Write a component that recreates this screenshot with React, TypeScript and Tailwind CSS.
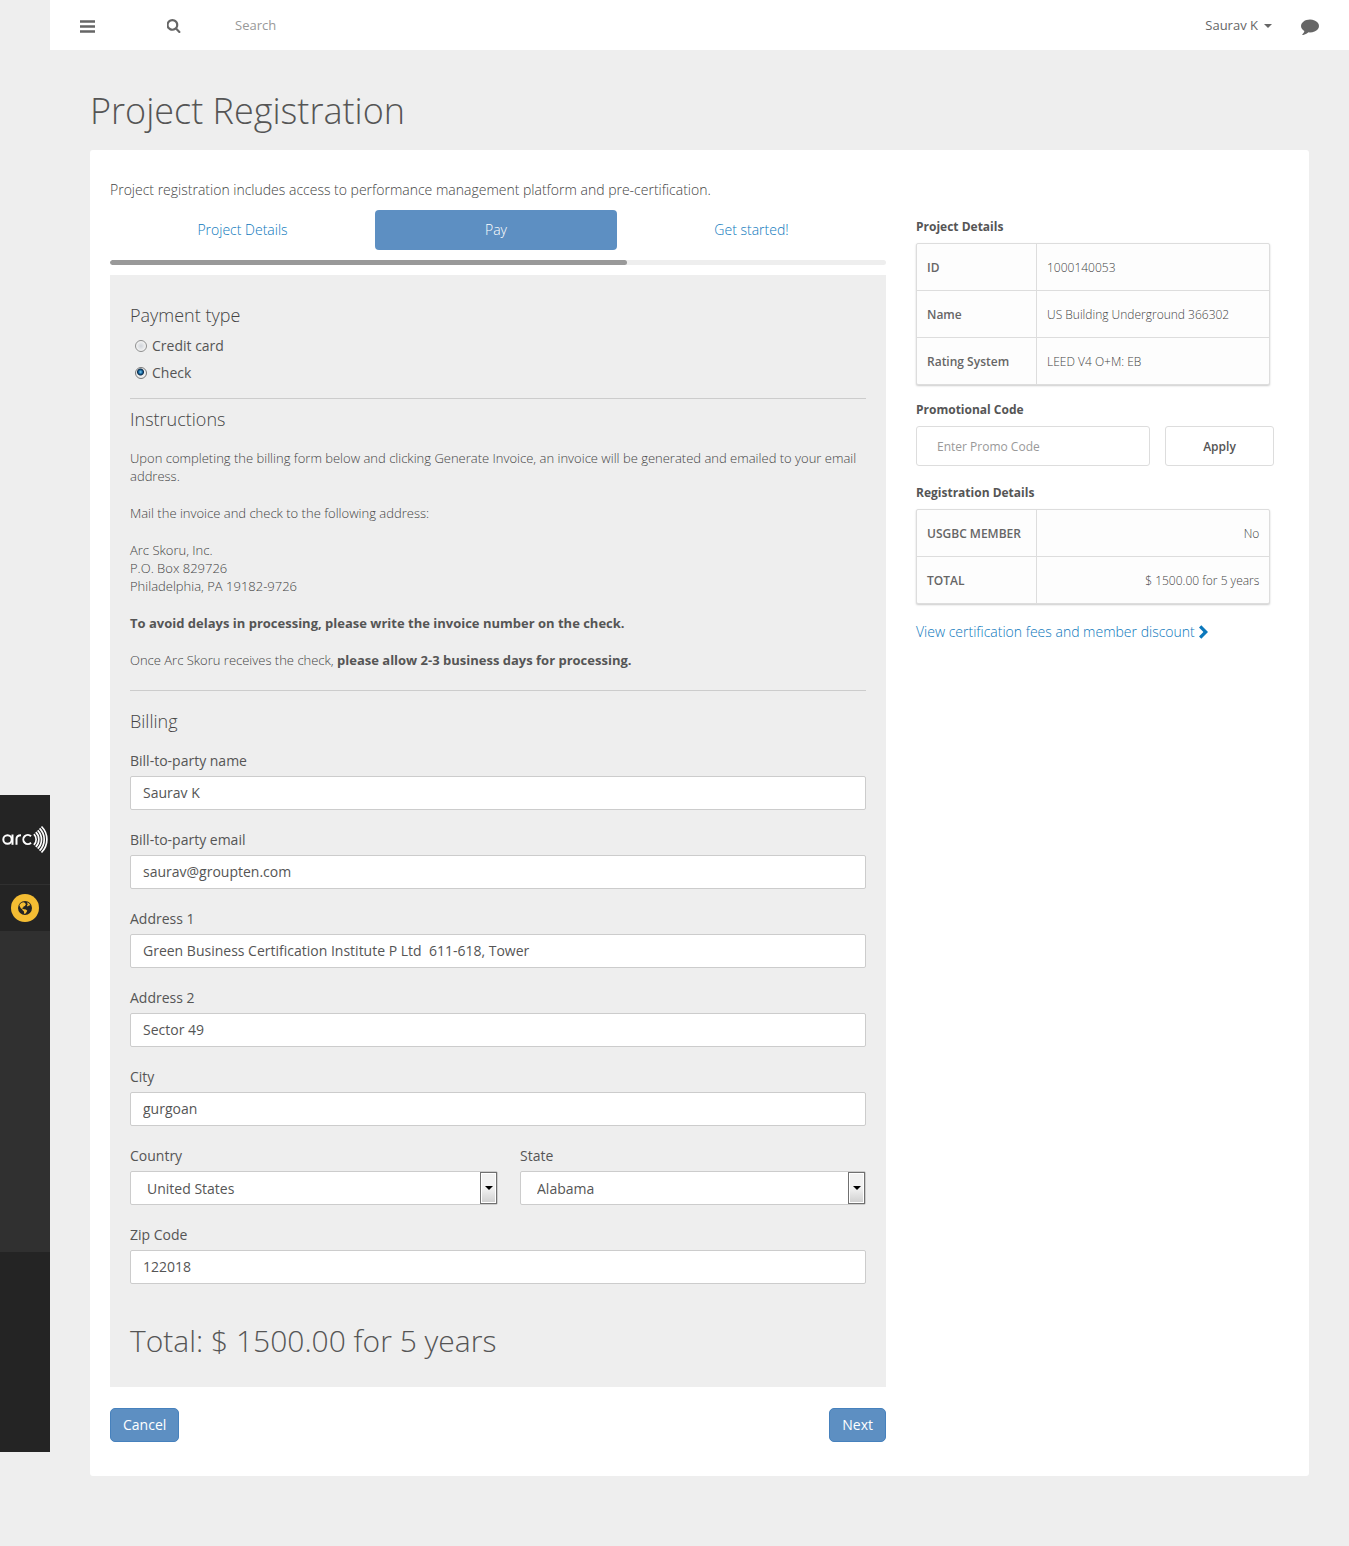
import type { ReactNode } from "react";

function MenuIcon() {
  return (
    <svg viewBox="0 0 15 13" className="h-[13px] w-[15px] fill-current" aria-hidden="true">
      <path d="M0 .3h15v2.400H0zM0 5.300h15v2.400H0zM0 10.300h15v2.400H0z" />
    </svg>
  );
}

function SearchIcon() {
  return (
    <svg viewBox="128 128 1536 1664" className="size-[14px] fill-current" aria-hidden="true">
      <path d="M1152 832q0-185-131.5-316.5t-316.5-131.5-316.5 131.5-131.5 316.5 131.5 316.5 316.5 131.5 316.5-131.5 131.5-316.5zm512 832q0 52-38 90t-90 38q-54 0-90-38l-343-342q-179 124-399 124-143 0-273.5-55.5t-225-150-150-225-55.5-273.5 55.5-273.5 150-225 225-150 273.5-55.5 273.5 55.5 225 150 150 225 55.5 273.5q0 220-124 399l343 343q37 37 37 90z" />
    </svg>
  );
}

function CommentIcon() {
  return (
    <svg viewBox="0 0 1792 1792" className="size-[18px] fill-current" aria-hidden="true">
      <path d="M1792 896q0 174-120 321.5t-326 233-450 85.5q-70 0-145-8-198 175-460 242-49 14-114 22-17 2-30.5-9t-17.5-29v-1q-3-4-.5-12t2-10 4.5-9.5l6-9 7-8.5 8-9q7-8 31-34.5t34.5-38 31-39.5 32.5-51 27-59 26-76q-157-89-247.5-220t-90.5-281q0-130 71-248.5t191-204.5 286-136.5 348-50.5q244 0 450 85.5t326 233 120 321.5z" />
    </svg>
  );
}

function ChevronIcon() {
  return (
    <svg viewBox="0 0 9 14" className="h-[14px] w-[9px] fill-current" aria-hidden="true">
      <path d="M0 2.500 2.300 .2 9 7 2.300 13.800 0 11.500 4.400 7z" />
    </svg>
  );
}

function GlobeIcon() {
  return (
    <svg viewBox="0 0 14 14" className="size-[14px]" aria-hidden="true">
      <circle cx="7" cy="7" r="7" fill="#242424" />
      <path
        fill="#f4bd33"
        d="M1.300 4 3.200 1.900 5.200 1.200 6.800 1.800 7.900 3.200 6.900 4.900 5.600 5.600 5 6.900 4 6.600 4.500 7.700 6 8.200 7.900 8.600 9.300 9.700 8.300 11.500 7 12.900 6.100 12.500 6 10.600 4.600 9.200 4.200 8.300 2.800 7.200 2 5.700ZM9 1.300 11.200 2.500 12.400 4.200 10.900 4.600 9.800 5.600 8.900 4.700 9.700 3.500Z"
      />
    </svg>
  );
}

/* Word mark followed by five concentric quarter arcs. */
function Logo() {
  return (
    <svg viewBox="0 0 50 29" className="h-[29px] w-full" fill="none" stroke="#fff" role="img" aria-label="arc">
      <g strokeWidth="2">
        <circle cx="7.500" cy="14.500" r="4.200" />
        <path d="M12.500 9.500V19.800" />
        <path d="M16.500 19.800V14Q16.500 10.300 21 10.300" />
        <path d="M31 11.300A4.500 4.500 0 1 0 31 17.700" />
      </g>
      <g strokeWidth="1.700">
        <path d="M33.900 9.100A7.600 7.600 0 0 1 33.900 19.900" />
        <path d="M35.800 7.200A10.300 10.300 0 0 1 35.800 21.800" />
        <path d="M37.700 5.300A13 13 0 0 1 37.700 23.700" />
        <path d="M39.600 3.400A15.700 15.700 0 0 1 39.600 25.600" />
        <path d="M41.500 1.500A18.400 18.400 0 0 1 41.500 27.500" />
      </g>
    </svg>
  );
}

function Sidebar() {
  return (
    <aside className="mt-[795px] w-[50px] shrink-0 self-start bg-[#242424]">
      <a href="#home" className="flex h-[90px] items-center border-b border-[#303030]">
        <Logo />
      </a>
      <a href="#world" aria-label="Projects" className="flex h-[46px] items-center justify-center">
        <span className="flex size-7 items-center justify-center rounded-full bg-[#f4bd33]">
          <GlobeIcon />
        </span>
      </a>
      <div className="h-[321px] bg-[#303030]" />
      <div className="h-[200px]" />
    </aside>
  );
}

function TopBar() {
  return (
    <header className="flex h-[50px] items-center bg-white px-[30px] pt-[2px] text-[13px] text-[#666]">
      <button type="button" aria-label="Menu" className="mr-[72px]">
        <MenuIcon />
      </button>
      <label htmlFor="search" aria-label="Search">
        <SearchIcon />
      </label>
      <input
        id="search"
        type="text"
        placeholder="Search"
        className="ml-[54px] min-w-0 flex-1 outline-none placeholder:text-[#999]"
      />
      <button type="button" className="mr-[29px] flex items-center gap-[6px]">
        Saurav K
        <span className="border-x-4 border-t-4 border-x-transparent border-t-[#666]" />
      </button>
      <button type="button" aria-label="Messages">
        <CommentIcon />
      </button>
    </header>
  );
}

function Steps() {
  return (
    <nav>
      <div className="grid grid-cols-[265fr_242fr_269fr] text-center text-sm leading-5 font-light text-[#0c78bc]">
        <a href="#details" className="py-[10px]">Project Details</a>
        <a href="#pay" aria-current="step" className="rounded bg-[#5d8fc2] py-[10px] text-white">Pay</a>
        <a href="#start" className="py-[10px]">Get started!</a>
      </div>
      <div className="my-[10px] h-[5px] overflow-hidden rounded-full bg-[#eee]">
        <div className="h-full w-2/3 rounded-full bg-[#999]" />
      </div>
    </nav>
  );
}

function PaymentOption({ id, label, checked }: { id: string; label: string; checked?: boolean }) {
  return (
    <div className="flex h-[27px] items-center gap-[5px] pl-[5px]">
      <input
        type="radio"
        id={id}
        name="payment"
        defaultChecked={checked}
        className="size-3 appearance-none rounded-full border border-[#8e8f8f] bg-[radial-gradient(circle,#d0d4da_0,#f4f4f4_5px)] checked:border-[#777] checked:bg-[radial-gradient(circle_at_45%_40%,#7fd3f5_0,#14609a_2px,#0b2b47_3px,#eee_4px)]"
      />
      <label htmlFor={id}>{label}</label>
    </div>
  );
}

function Field({ id, label, value }: { id: string; label: string; value: string }) {
  return (
    <div>
      <label htmlFor={id} className="mb-[5px] block">{label}</label>
      <input
        id={id}
        type="text"
        defaultValue={value}
        className="h-[34px] w-full rounded-xs border border-[#ccc] bg-white px-3 pb-[2px] outline-none"
      />
    </div>
  );
}

function SelectField({ id, label, value }: { id: string; label: string; value: string }) {
  return (
    <div>
      <label htmlFor={id} className="mb-[5px] block">{label}</label>
      <div className="relative">
        <select
          id={id}
          defaultValue={value}
          className="h-[34px] w-full appearance-none rounded-xs border border-[#ccc] bg-white px-4 pt-[2px] outline-none"
        >
          <option>{value}</option>
        </select>
        <span className="pointer-events-none absolute inset-y-px right-px flex w-[17px] items-center justify-center border border-[#707070] bg-linear-to-b from-[#f2f2f2] from-50% to-[#cfcfcf] inset-ring inset-ring-white">
          <span className="border-x-4 border-t-4 border-x-transparent border-t-black" />
        </span>
      </div>
    </div>
  );
}

function Heading({ children }: { children: ReactNode }) {
  return <h2 className="text-lg leading-5 font-light text-[#444]">{children}</h2>;
}

function SideTitle({ children }: { children: ReactNode }) {
  return <h3 className="mb-2 text-xs leading-[17px] font-bold">{children}</h3>;
}

function DetailsTable({ rows, alignRight }: { rows: [string, string][]; alignRight?: boolean }) {
  return (
    <div className="w-[95%] overflow-hidden rounded-xs border border-[#ddd] bg-[#fdfdfd] shadow-[0_1px_2px_#ccc]">
      <table className="w-full table-fixed border-separate border-spacing-0 text-xs">
        <tbody>
          {rows.map(([name, value]) => (
            <tr key={name} className="group">
              <th
                scope="row"
                className="h-[47px] w-[120px] border-r border-b border-[#ddd] px-[10px] pt-[2px] text-left font-semibold text-[#666] group-last:h-[46px] group-last:border-b-0"
              >
                {name}
              </th>
              <td
                className={
                  "border-b border-[#ddd] px-[10px] pt-[2px] font-light text-[#444] group-last:border-b-0 " +
                  (alignRight ? "text-right" : "text-left")
                }
              >
                {value}
              </td>
            </tr>
          ))}
        </tbody>
      </table>
    </div>
  );
}

function PaymentPanel() {
  return (
    <section className="bg-[#eee] p-5 text-sm leading-5">
      <div className="mt-[10px]">
        <Heading>Payment type</Heading>
      </div>
      <div className="mt-[7px] mb-3">
        <PaymentOption id="card" label="Credit card" />
        <PaymentOption id="check" label="Check" checked />
      </div>
      <hr className="mb-[10px] border-[#ccc]" />
      <Heading>Instructions</Heading>
      <div className="mt-5 mb-[21px] flex flex-col gap-[19px] text-[13px] leading-[18px] font-light text-[#444]">
        <p>
          Upon completing the billing form below and clicking Generate Invoice, an invoice will be generated and
          emailed to your email address.
        </p>
        <p>Mail the invoice and check to the following address:</p>
        <address className="not-italic">
          Arc Skoru, Inc.
          <br />
          P.O. Box 829726
          <br />
          Philadelphia, PA 19182-9726
        </address>
        <p className="font-bold text-[#555]">
          To avoid delays in processing, please write the invoice number on the check.
        </p>
        <p>
          Once Arc Skoru receives the check,{" "}
          <b className="font-bold text-[#555]">please allow 2-3 business days for processing.</b>
        </p>
      </div>
      <hr className="mb-5 border-[#ccc]" />
      <Heading>Billing</Heading>
      <div className="mt-5 flex flex-col gap-5">
        <Field id="name" label="Bill-to-party name" value="Saurav K" />
        <Field id="email" label="Bill-to-party email" value="saurav@groupten.com" />
        <Field id="address1" label="Address 1" value="Green Business Certification Institute P Ltd  611-618, Tower" />
        <Field id="address2" label="Address 2" value="Sector 49" />
        <Field id="city" label="City" value="gurgoan" />
        <div className="grid grid-cols-[368fr_346fr] gap-[22px]">
          <SelectField id="country" label="Country" value="United States" />
          <SelectField id="state" label="State" value="Alabama" />
        </div>
        <Field id="zip" label="Zip Code" value="122018" />
      </div>
      <p className="mt-[37px] mb-[6px] text-[30px] leading-10 font-light">Total: $ 1500.00 for 5 years</p>
    </section>
  );
}

function Summary() {
  return (
    <aside className="w-1/3 pt-[38px] pr-[30px]">
      <SideTitle>Project Details</SideTitle>
      <DetailsTable
        rows={[
          ["ID", "1000140053"],
          ["Name", "US Building Underground 366302"],
          ["Rating System", "LEED V4 O+M: EB"],
        ]}
      />
      <div className="mt-4">
        <SideTitle>Promotional Code</SideTitle>
      </div>
      <div className="mb-[18px] flex gap-[15px] pr-[15px] text-xs">
        <input
          type="text"
          aria-label="Promotional Code"
          placeholder="Enter Promo Code"
          className="h-10 min-w-0 flex-1 rounded-[3px] border border-[#ddd] px-5 outline-none placeholder:text-[#999]"
        />
        <button type="button" className="h-10 w-[109px] rounded-[3px] border border-[#ddd] pt-[2px] font-semibold">
          Apply
        </button>
      </div>
      <SideTitle>Registration Details</SideTitle>
      <DetailsTable
        alignRight
        rows={[
          ["USGBC MEMBER", "No"],
          ["TOTAL", "$ 1500.00 for 5 years"],
        ]}
      />
      <a href="#fees" className="mt-[18px] flex items-center gap-1 text-sm leading-5 font-light text-[#0c78bc]">
        View certification fees and member discount
        <ChevronIcon />
      </a>
    </aside>
  );
}

const buttonClass =
  "h-[34px] rounded-[5px] border border-[#4681bd] bg-[#5d8fc2] px-3 text-sm text-white";

export default function App() {
  return (
    <div className="flex min-h-screen bg-[#eee] font-['Open_Sans',sans-serif] text-[#555]">
      <Sidebar />
      <div className="min-w-0 flex-1">
        <TopBar />
        <main className="px-10 pt-10 pb-[70px]">
          <h1 className="mb-[18px] text-4xl leading-[42px] font-light">Project Registration</h1>
          <div className="rounded-[3px] bg-white px-5 pt-[30px] pb-[34px]">
            <div className="-mr-[30px] flex items-start">
              <div className="w-2/3 pr-[30px]">
                <p className="mb-[10px] text-sm leading-5 font-light text-[#444]">
                  Project registration includes access to performance management platform and pre-certification.
                </p>
                <Steps />
                <PaymentPanel />
                <div className="mt-[21px] flex justify-between">
                  <button type="button" className={buttonClass}>Cancel</button>
                  <button type="button" className={buttonClass}>Next</button>
                </div>
              </div>
              <Summary />
            </div>
          </div>
        </main>
      </div>
    </div>
  );
}
